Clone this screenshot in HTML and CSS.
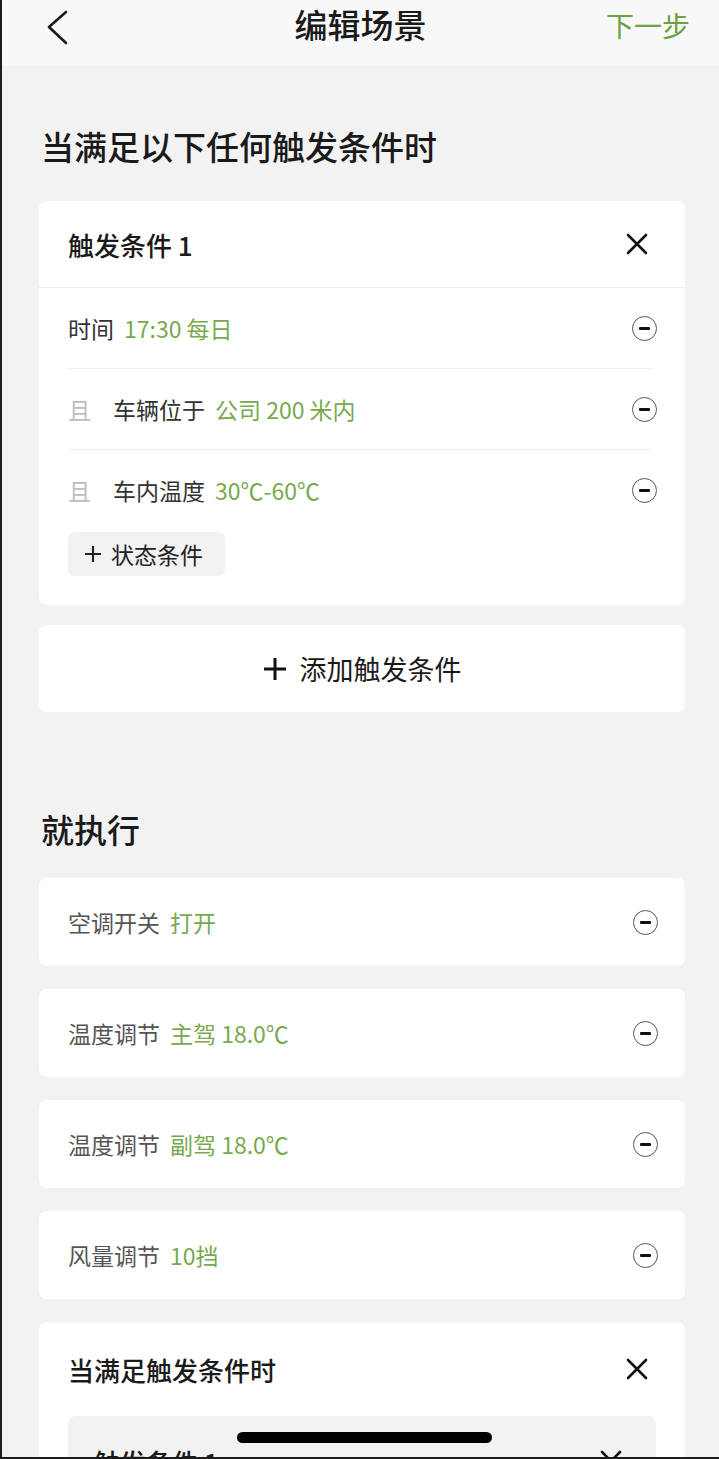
FILE: index.html
```html
<!DOCTYPE html>
<html lang="zh-CN">
<head>
  <meta charset="UTF-8" />
  <meta name="viewport" content="width=device-width, initial-scale=1.0"/>
  <title>编辑场景</title>
  <link rel="stylesheet" href="styles.css">
</head>
<body>
  <div class="phone">
    <!-- Top bar -->
    <header class="topbar">
      <svg class="back" width="30" height="40" viewBox="0 0 30 40">
        <polyline points="22,5 5,20 22,36" fill="none" stroke="#1a1a1a" stroke-width="2.6" stroke-linecap="round" stroke-linejoin="round"/>
      </svg>
      <div class="title">编辑场景</div>
      <div class="next">下一步</div>
    </header>

    <main class="content">
      <h2 class="section-title first">当满足以下任何触发条件时</h2>

      <div class="card trigger">
        <div class="card-head">
          <span>触发条件 1</span>
          <svg class="close" width="22" height="22" viewBox="0 0 22 22">
            <path d="M2 2 L20 20 M20 2 L2 20" stroke="#111" stroke-width="2.6" stroke-linecap="round"/>
          </svg>
        </div>
        <div class="cond-list">
          <div class="cond">
            <span class="label">时间</span><span class="value">17:30 每日</span>
            <span class="minus"></span>
          </div>
          <div class="cond">
            <span class="and">且</span><span class="label">车辆位于</span><span class="value">公司 200 米内</span>
            <span class="minus"></span>
          </div>
          <div class="cond">
            <span class="and">且</span><span class="label">车内温度</span><span class="value">30℃-60℃</span>
            <span class="minus"></span>
          </div>
        </div>
        <div class="state-btn">
          <svg class="plus" width="18" height="18" viewBox="0 0 18 18">
            <path d="M9 1 V17 M1 9 H17" stroke="#222" stroke-width="2.2"/>
          </svg>状态条件
        </div>
      </div>

      <div class="card add-card">
        <svg class="plus-big" width="24" height="24" viewBox="0 0 24 24">
          <path d="M12 1 V23 M1 12 H23" stroke="#111" stroke-width="3"/>
        </svg>添加触发条件
      </div>

      <h2 class="section-title second">就执行</h2>

      <div class="actions">
        <div class="card action">
          <span class="label">空调开关</span><span class="value">打开</span>
          <span class="minus"></span>
        </div>
        <div class="card action">
          <span class="label">温度调节</span><span class="value">主驾 18.0℃</span>
          <span class="minus"></span>
        </div>
        <div class="card action">
          <span class="label">温度调节</span><span class="value">副驾 18.0℃</span>
          <span class="minus"></span>
        </div>
        <div class="card action">
          <span class="label">风量调节</span><span class="value">10挡</span>
          <span class="minus"></span>
        </div>

        <div class="card nested">
          <div class="nested-head">
            <span>当满足触发条件时</span>
            <svg class="close" width="22" height="22" viewBox="0 0 22 22">
              <path d="M2 2 L20 20 M20 2 L2 20" stroke="#111" stroke-width="2.6" stroke-linecap="round"/>
            </svg>
          </div>
          <div class="inner">
            <span>触发条件 1</span>
            <svg class="close" width="22" height="22" viewBox="0 0 22 22">
              <path d="M2 2 L20 20 M20 2 L2 20" stroke="#111" stroke-width="2.6" stroke-linecap="round"/>
            </svg>
          </div>
        </div>
      </div>
    </main>

    <div class="home-bar"></div>
  </div>
</body>
</html>
```

FILE: styles.css
```css
* {
  box-sizing: border-box;
}

body {
  margin: 0;
  font-family: "Noto Sans CJK SC", "Noto Sans", sans-serif;
  color: #1a1a1a;
  background: #f2f2f2;
}

.phone {
  position: relative;
  width: 719px;
  height: 1459px;
  overflow: hidden;
  background: #f2f2f2;
  border-left: 2px solid #1c1c1c;
  border-bottom: 2px solid #1c1c1c;
}

/* Top bar */
.topbar {
  height: 66px;
  background: #f8f8f8;
  display: flex;
  align-items: center;
  justify-content: space-between;
  padding: 0 29px 0 42px;
  position: relative;
}

.back {
  margin-top: -12px;
}

.title {
  position: absolute;
  left: 0;
  right: 0;
  top: 0;
  text-align: center;
  font-size: 33px;
  font-weight: 500;
  line-height: 48px;
  pointer-events: none;
}

.next {
  font-size: 28px;
  color: #6ba043;
  line-height: 48px;
  margin-top: -16px;
}

/* Content */
.content {
  padding: 0 34px 0 37px;
}

.section-title {
  margin: 0;
  font-size: 33px;
  font-weight: 500;
  line-height: 40px;
  padding-left: 2px;
}

.section-title.first {
  margin-top: 60px;
  margin-bottom: 35px;
}

.section-title.second {
  margin-top: 97px;
  margin-bottom: 29px;
}

.card {
  background: #fff;
  border-radius: 8px;
}

.trigger {
  padding-bottom: 29px;
}

.card-head {
  height: 87px;
  display: flex;
  align-items: center;
  justify-content: space-between;
  padding: 0 37px 0 29px;
  border-bottom: 1px solid #ececec;
  font-size: 26px;
  font-weight: 500;
}

.cond-list {
  padding: 0 33px 0 29px;
}

.cond {
  height: 81px;
  display: flex;
  align-items: center;
  font-size: 23px;
  border-bottom: 1px solid #efefef;
}

.cond:last-child {
  border-bottom: none;
  height: 80px;
}

.cond .label {
  color: #333;
}

.cond .minus {
  margin-right: -5px;
}

.and {
  color: #bdbdbd;
  width: 45px;
}

.value {
  color: #78a94f;
  margin-left: 10px;
}

.minus {
  margin-left: auto;
  width: 25px;
  height: 25px;
  border: 1.6px solid #555;
  border-radius: 50%;
  position: relative;
}

.minus::after {
  content: "";
  position: absolute;
  left: 6px;
  right: 6px;
  top: 50%;
  height: 3px;
  margin-top: -1.5px;
  background: #111;
  border-radius: 1px;
}

.state-btn {
  margin: 2px 0 0 29px;
  width: 157px;
  height: 44px;
  background: #f2f2f2;
  border-radius: 6px;
  font-size: 23px;
  color: #222;
  display: flex;
  align-items: center;
  padding-left: 16px;
}

.plus {
  margin-right: 9px;
}

.add-card {
  margin-top: 20px;
  height: 87px;
  display: flex;
  align-items: center;
  justify-content: center;
  font-size: 27px;
  color: #1a1a1a;
}

.plus-big {
  margin-right: 13px;
}

/* Actions */
.actions {
  display: flex;
  flex-direction: column;
  gap: 23px;
}

.action {
  height: 88px;
  display: flex;
  align-items: center;
  padding: 0 27px 0 29px;
  font-size: 23px;
}

.action .label {
  color: #555;
}

.nested {
  height: 200px;
  padding: 0 29px;
}

.nested-head {
  height: 94px;
  display: flex;
  align-items: center;
  justify-content: space-between;
  padding-right: 8px;
  font-size: 26px;
  font-weight: 500;
}

.inner {
  background: #f2f2f2;
  border-radius: 8px;
  height: 90px;
  display: flex;
  align-items: center;
  justify-content: space-between;
  padding: 0 34px 0 26px;
  font-size: 26px;
  font-weight: 500;
}

.home-bar {
  position: absolute;
  left: 235px;
  top: 1432px;
  width: 255px;
  height: 11px;
  border-radius: 6px;
  background: #000;
}
```
